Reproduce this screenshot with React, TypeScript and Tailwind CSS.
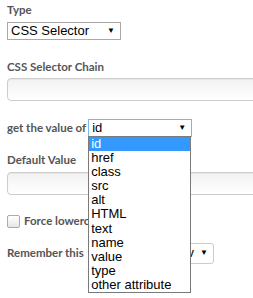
import React from "react";

const options = ["id", "href", "class", "src", "alt", "HTML", "text", "name", "value", "type", "other attribute"];

function Label({ children }: { children: React.ReactNode }) {
  return <div className="text-[11.5px] font-bold text-[#555] leading-[16px] font-['Lato',sans-serif]">{children}</div>;
}

function TextBox() {
  return (
    <div className="h-[23px] w-[260px] rounded-[4px] border border-[#ccc] bg-gradient-to-b from-[#f2f2f2] to-white shadow-[inset_0_1px_1px_rgba(0,0,0,0.05)]" />
  );
}

export default function App() {
  return (
    <div className="relative h-[298px] w-[253px] overflow-hidden bg-white pl-[7px] pt-[2px] font-['Liberation_Sans',Arial,sans-serif]">
      <Label>Type</Label>
      <div className="mt-[4px] flex h-[18px] w-[114px] items-center justify-between border border-[#a9a9a9] bg-white pl-[3px] pr-[5px] text-[13px] text-black">
        <span>CSS Selector</span>
        <span className="text-[8px]">▼</span>
      </div>

      <div className="mt-[19px]">
        <Label>CSS Selector Chain</Label>
      </div>
      <div className="mt-[3px]">
        <TextBox />
      </div>

      <div className="mt-[18px] flex h-[18px] items-center gap-[2px]">
        <span className="text-[11.5px] font-bold text-[#555] font-['Lato',sans-serif]">get the value of</span>
        <div className="relative">
          <div className="flex h-[18px] w-[104px] items-center justify-between border border-[#7eb4ea] bg-white pl-[3px] pr-[5px] text-[13px] text-black">
            <span>id</span>
            <span className="text-[8px]">▼</span>
          </div>
          {/* open options list, drawn over the fields below */}
          <ul className="absolute left-0 top-[17px] z-10 w-[103px] border border-[#7a7a7a] bg-white text-[13px] leading-[14.1px] text-black">
            {options.map((o, i) => (
              <li key={o} className={i === 0 ? "bg-[#3399ff] pl-[2px] text-white" : "pl-[2px]"}>
                {o}
              </li>
            ))}
          </ul>
        </div>
      </div>

      <div className="mt-[15px]">
        <Label>Default Value</Label>
      </div>
      <div className="mt-[4px]">
        <TextBox />
      </div>

      <div className="mt-[18px] flex h-[16px] items-center gap-[4px]">
        <span className="h-[13px] w-[13px] shrink-0 rounded-[2px] border border-[#aaa] bg-gradient-to-b from-white to-[#e6e6e6]" />
        <span className="whitespace-nowrap text-[11.5px] font-bold text-[#555] font-['Lato',sans-serif]">Force lowercase</span>
      </div>

      <div className="mt-[16px] flex h-[16px] items-center">
        <span className="w-[81px] shrink-0 whitespace-nowrap text-[11.5px] font-bold text-[#555] font-['Lato',sans-serif]">Remember this</span>
        <div className="ml-[24px] flex h-[21px] w-[102px] shrink-0 items-center justify-end rounded-[3px] border border-[#ccc] bg-white pr-[5px] text-[13px]">
          <span className="mr-[6px] text-black">v</span>
          <span className="text-[8px]">▼</span>
        </div>
      </div>
    </div>
  );
}
